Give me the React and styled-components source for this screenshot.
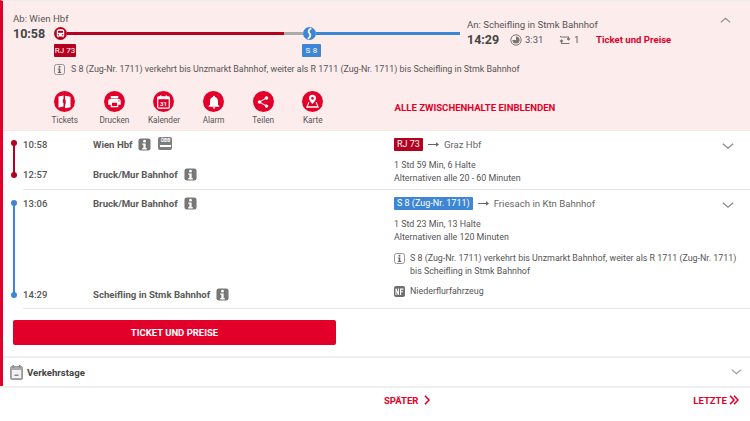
import React from 'react';
import styled, { createGlobalStyle } from 'styled-components';

const RED = '#e2002a';
const DARK_RED = '#b5001f';
const BLUE = '#3d86d6';
const TEXT = '#555';
const STRONG = '#444';

const Global = createGlobalStyle`
  html, body { margin: 0; padding: 0; background: #fff; }
  body { font-family: Roboto, "Liberation Sans", sans-serif; color: ${TEXT}; width: 750px; height: 421px; overflow: hidden; }
  * { box-sizing: border-box; }
`;

const Page = styled.div`width: 750px; display: flex; flex-direction: column;`;
const Framed = styled.div`border-left: 3px solid ${RED}; border-top: 1px solid #ececec;`;

const Summary = styled.section`
  background: #fdecec; height: 130px; padding: 11px 10px 0 10px; border-bottom: 1px solid #ececec;
  display: flex; flex-direction: column;
`;
const JourneyRow = styled.div`display: flex; height: 46px;`;
const DepartColumn = styled.div`width: 41px; flex: none;`;
const StationLabel = styled.div`font-size: 9.6px; line-height: 13px; white-space: nowrap; color: ${TEXT};`;
const DepartTime = styled.div`font-size: 12.5px; line-height: 16px; font-weight: 700; color: ${STRONG}; margin-top: 1px;`;

const Track = styled.div`width: 406px; flex: none; padding-top: 15px; display: flex; flex-direction: column;`;
const TrackLine = styled.div`display: flex; align-items: center; height: 13px;`;
const Segment = styled.div`height: 3px; width: ${p => p.$w}px; background: ${p => p.$c}; flex: none;`;
const TrackBadges = styled.div`display: flex; margin-top: 4px;`;
const LineBadge = styled.span`
  display: inline-block; background: ${p => p.$c}; color: #fff; border-radius: 1px; font-size: ${p => p.$size || 9}px;
  line-height: 13px; height: 13px; padding: 0 ${p => p.$pad ?? 2}px; white-space: nowrap; text-align: center;
`;
const FirstBadge = styled(LineBadge)`width: 22px; font-size: 8px; padding: 0;`;
const SecondBadge = styled(LineBadge)`margin-left: 226px; width: 19px; font-size: 8px; letter-spacing: .3px; padding: 0;`;

const ArriveColumn = styled.div`margin-left: 7px; flex: 1; padding-top: 6px;`;
const ArriveLine = styled.div`display: flex; align-items: center; margin-top: 0; height: 17px;`;
const ArriveTime = styled.div`font-size: 12.5px; font-weight: 700; color: ${STRONG}; width: 43px; flex: none;`;
const Meta = styled.span`font-size: 9.5px; color: ${TEXT}; display: flex; align-items: center; gap: 3px; width: ${p => p.$w}px; flex: none;`;
const TicketLink = styled.a`font-size: 9.6px; font-weight: 700; color: ${RED}; white-space: nowrap;`;
const CollapseBox = styled.div`width: 20px; flex: none; margin-top: -4px; margin-left: 2px;`;

const Notice = styled.div`display: flex; align-items: center; gap: 6px; margin: 5px 0 0 41px; height: 13px;`;
const NoticeText = styled.span`font-size: 8.9px; line-height: 13px; white-space: nowrap; color: ${TEXT};`;

const ActionBar = styled.div`display: flex; align-items: flex-start; margin-top: 15px; margin-left: 27px;`;
const Action = styled.div`width: 49.6px; flex: none; display: flex; flex-direction: column; align-items: center; gap: 2px;`;
const ActionCircle = styled.span`
  width: 21px; height: 21px; border-radius: 50%; background: ${RED}; display: flex; align-items: center; justify-content: center;
`;
const ActionLabel = styled.span`font-size: 8.2px; line-height: 12px; color: ${TEXT}; white-space: nowrap;`;
const ShowAll = styled.a`font-size: 9.6px; font-weight: 700; color: ${RED}; margin-left: 57px; margin-top: 11px; white-space: nowrap;`;

const Leg = styled.section`display: flex; height: ${p => p.$h}px; padding-left: 7px;`;
const Timeline = styled.div`
  width: 7px; flex: none; display: flex; flex-direction: column; align-items: center; padding-top: ${p => p.$top}px;
`;
const Dot = styled.span`width: 6px; height: 6px; border-radius: 50%; background: ${p => p.$c}; flex: none;`;
const Rail = styled.span`width: 2px; height: ${p => p.$h}px; background: ${p => p.$c}; flex: none; margin: -1px 0;`;

const LegBody = styled.div`
  margin-left: 6px; flex: 1; display: flex; border-bottom: 1px solid #e6e6e6;
`;
const Stops = styled.div`
  width: 371px; flex: none; display: flex; flex-direction: column; justify-content: space-between; padding: ${p => p.$pad};
`;
const Stop = styled.div`display: flex; align-items: center; height: 14px;`;
const StopTime = styled.span`font-size: 9.5px; font-weight: 500; color: ${TEXT}; width: 70px; flex: none; letter-spacing: .1px;`;
const StopName = styled.span`font-size: 9.6px; font-weight: 700; color: #5a5a5a; white-space: nowrap; margin-right: 6px;`;
const IconGap = styled.span`display: inline-flex; margin-right: 7px;`;

const ObbIcon = styled.span`
  width: 14px; height: 13px; background: #7d7d7d; border-radius: 2px; color: #fff; font-size: 4.8px; line-height: 6px;
  display: flex; flex-direction: column; align-items: center; padding-top: 1px; font-weight: 700; margin-top: -1px;
  &::after { content: ''; display: block; width: 11px; height: 1.5px; background: #fff; margin-top: 1px; }
`;

const Details = styled.div`flex: 1; padding: 7px 0 0 0; min-width: 0;`;
const LineHead = styled.div`display: flex; align-items: center; height: 13px;`;
const Direction = styled.span`font-size: 9.6px; color: #666; white-space: nowrap; margin-left: 5px;`;
const HeadSpacer = styled.span`flex: 1;`;
const ChevronBox = styled.span`display: inline-flex; margin-right: 16px; margin-top: 3px;`;
const Summary2 = styled.div`font-size: 8.9px; line-height: 12.5px; color: ${TEXT}; margin-top: 8px;`;
const NoteRow = styled.div`display: flex; gap: 5px; margin-top: ${p => p.$mt}px; font-size: 8.9px; line-height: 12.5px; color: ${TEXT}; width: 350px;`;
const NoteIcon = styled.span`flex: none; width: 11px; display: inline-flex; margin-top: 1px;`;

const ButtonArea = styled.div`padding: 11px 0 12px 10px; height: 49px; border-bottom: 2px solid #f0f0f0;`;
const TicketButton = styled.button`
  width: 323px; height: 25px; background: ${RED}; color: #fff; font-family: inherit; border: 0; border-radius: 2px;
  font-size: 9.5px; font-weight: 700; display: block; padding: 0 0 1px;
`;
const DaysRow = styled.div`
  height: 28px; display: flex; align-items: center; padding-left: 7px; gap: 4px;
`;
const DaysLabel = styled.span`font-size: 9.6px; font-weight: 700; color: ${STRONG}; flex: 1;`;
const DaysChevron = styled.span`display: inline-flex; margin-right: 8px;`;

const Pager = styled.nav`
  border-top: 2px solid #f0f0f0; display: flex; align-items: center; height: 26px; padding-left: 384px; margin-top: 0;
`;
const PagerLink = styled.a`
  font-size: 9.5px; font-weight: 700; color: ${RED}; display: inline-flex; align-items: center; gap: ${p => p.$gap}px; margin-left: ${p => p.$ml || 0}px;
  white-space: nowrap;
`;

const Chevron = ({ up, w = 12, c = '#8a8a8a' }) => (
  <svg width={w} height={w * 0.55} viewBox="0 0 16 9" fill="none" stroke={c} strokeWidth="1.7">
    <path d={up ? 'M1 8 L8 2 L15 8' : 'M1 1 L8 7 L15 1'} />
  </svg>
);

const InfoSolid = () => (
  <svg width="13" height="13" viewBox="0 0 14 14">
    <rect x=".5" y=".5" width="13" height="13" rx="2.5" fill="#777" />
    <circle cx="7" cy="3.4" r="1.5" fill="#fff" />
    <path d="M4.6 6h3.6v4.8h1.2v1.5H4.6v-1.5h1.2V7.4H4.6z" fill="#fff" />
  </svg>
);
const InfoOutline = () => (
  <svg width="11" height="11" viewBox="0 0 11 11">
    <rect x=".5" y=".5" width="10" height="10" rx="2" fill="none" stroke="#888" strokeWidth=".9" />
    <circle cx="5.5" cy="2.7" r="1" fill="#666" />
    <path d="M3.8 4.5h2.5v3.6h.9v1H3.8v-1h.9V5.5h-.9z" fill="#666" />
  </svg>
);
const NfIcon = () => (
  <svg width="11" height="11" viewBox="0 0 11 11">
    <rect width="11" height="11" rx="2" fill="#6e6e6e" />
    <path d="M1.5 9V2.5h1l1.4 3.8V2.5h1V9h-1L2.5 5.3V9zM6 9V2.5h3.5v1.2H7.1v1.5h2v1.1h-2V9z" fill="#fff" />
  </svg>
);

const RailIcon = () => (
  <svg width="13" height="13" viewBox="0 0 13 13" style={{ flex: 'none' }}>
    <circle cx="6.5" cy="6.5" r="6.5" fill={DARK_RED} />
    <path d="M2.8 4c0-1.2 1-1.7 3.7-1.7s3.7.5 3.7 1.7v4.4c0 .5-.3.8-.6.9v1H8.4v-.8H4.6v.8H3.4v-1c-.3-.1-.6-.4-.6-.9z" fill="#fff" />
    <rect x="4" y="3.8" width="5" height="2" fill={DARK_RED} />
    <circle cx="4.4" cy="7.8" r=".7" fill={DARK_RED} />
    <circle cx="8.6" cy="7.8" r=".7" fill={DARK_RED} />
  </svg>
);
const SBahnIcon = () => (
  <svg width="13" height="13" viewBox="0 0 13 13" style={{ flex: 'none' }}>
    <circle cx="6.5" cy="6.5" r="6.5" fill={BLUE} />
    <path d="M8.2 1.2 C5.4 3 5 4.6 6.5 6.3 C8 8 7.6 10 4.8 11.8" fill="none" stroke="#fff" strokeWidth="1.8" />
  </svg>
);
const ClockIcon = () => (
  <svg width="12" height="12" viewBox="0 0 12 12">
    <circle cx="6" cy="6" r="5.2" fill="none" stroke="#777" strokeWidth="1" />
    <path d="M6 2.4A3.6 3.6 0 1 1 2.4 6H6z" fill="#777" />
  </svg>
);
const TransferIcon = () => (
  <svg width="12" height="11" viewBox="0 0 12 11" fill="none" stroke="#777" strokeWidth="1.1">
    <path d="M1.5 3h8v3M8 4.5l1.5 1.5L11 4.5M1.5 2v1" />
    <path d="M10.5 9.5h-8v-3M1 7.5 2.5 6 4 7.5" />
  </svg>
);
const Arrow = () => (
  <svg width="11" height="7" viewBox="0 0 13 7" style={{ marginLeft: 5, flex: 'none' }}>
    <path d="M0 3h9.5V.8L13 3.5 9.5 6.2V4H0z" fill="#666" />
  </svg>
);
const CalendarSmall = () => (
  <svg width="13" height="15" viewBox="0 0 13 15">
    <rect x=".5" y="1.5" width="12" height="13" rx="1.5" fill="#aaa" stroke="#999" />
    <rect x="2" y="5" width="9" height="8" fill="#f2f2f2" />
    <rect x="4.5" y="9.5" width="4" height="1.5" fill="#888" />
    <rect x="2.5" y="0" width="1.5" height="3" fill="#888" />
    <rect x="9" y="0" width="1.5" height="3" fill="#888" />
  </svg>
);
const Next = () => (
  <svg width="6" height="10" viewBox="0 0 6 10" fill="none" stroke={RED} strokeWidth="1.6"><path d="M1 .7 5 5 1 9.3" /></svg>
);
const Last = () => (
  <svg width="10" height="10" viewBox="0 0 10 10" fill="none" stroke={RED} strokeWidth="1.6"><path d="M1 .7 5 5 1 9.3M5 .7 9 5 5 9.3" /></svg>
);

const icons = {
  tickets: <svg width="15" height="15" viewBox="0 0 15 15" fill="#fff"><path d="M1.5 2.5l5-1v3.6l-.7.7v2.4l.7.7v3.6l-5 1z" /><path d="M8 1.8l5.5 1v10.4l-5.5 1v-3.6l.7-.7V6.1L8 5.4z" /></svg>,
  print: <svg width="15" height="15" viewBox="0 0 24 24" fill="#fff"><path d="M19 8H5c-1.66 0-3 1.34-3 3v6h4v4h12v-4h4v-6c0-1.66-1.34-3-3-3zm-3 11H8v-5h8v5zm3-7c-.55 0-1-.45-1-1s.45-1 1-1 1 .45 1 1-.45 1-1 1zm-1-9H6v4h12V3z" /></svg>,
  calendar: (
    <svg width="13" height="14" viewBox="0 0 13 14">
      <rect x=".7" y="1.8" width="11.6" height="11.4" rx="1" fill="none" stroke="#fff" strokeWidth="1.2" />
      <rect x=".7" y="1.8" width="11.6" height="2.4" fill="#fff" />
      <rect x="3" y=".3" width="1.3" height="2.4" fill="#fff" />
      <rect x="8.7" y=".3" width="1.3" height="2.4" fill="#fff" />
      <text x="6.5" y="11.2" fontSize="6" fontWeight="700" fill="#fff" textAnchor="middle" fontFamily="Roboto, sans-serif">31</text>
    </svg>
  ),
  bell: <svg width="16" height="16" viewBox="0 0 24 24" fill="#fff"><path d="M12 22c1.1 0 2-.9 2-2h-4c0 1.1.89 2 2 2zm6-6v-5c0-3.07-1.64-5.64-4.5-6.32V4c0-.83-.67-1.5-1.5-1.5s-1.5.67-1.5 1.5v.68C7.63 5.36 6 7.92 6 11v5l-2 2v1h16v-1l-2-2z" /></svg>,
  share: <svg width="14" height="14" viewBox="0 0 24 24" fill="#fff"><path d="M18 16.08c-.76 0-1.44.3-1.96.77L8.91 12.7c.05-.23.09-.46.09-.7s-.04-.47-.09-.7l7.05-4.11c.54.5 1.25.81 2.04.81 1.66 0 3-1.34 3-3s-1.34-3-3-3-3 1.34-3 3c0 .24.04.47.09.7L8.04 9.81C7.5 9.31 6.79 9 6 9c-1.66 0-3 1.34-3 3s1.34 3 3 3c.79 0 1.5-.31 2.04-.81l7.12 4.16c-.05.21-.08.43-.08.65 0 1.61 1.31 2.92 2.92 2.92 1.61 0 2.92-1.31 2.92-2.92s-1.31-2.92-2.92-2.92z" /></svg>,
  map: (
    <svg width="15" height="15" viewBox="0 0 15 15">
      <path d="M7.5 .8a3.5 3.5 0 0 0-3.5 3.5c0 2.4 3.5 5.7 3.5 5.7S11 6.7 11 4.3A3.5 3.5 0 0 0 7.5.8zm0 4.9a1.4 1.4 0 1 1 0-2.8 1.4 1.4 0 0 1 0 2.8z" fill="#fff" />
      <path d="M3.4 8 1 13.7h13L11.6 8h-1l1.6 4.2H2.8L4.4 8z" fill="#fff" />
    </svg>
  ),
};

const actions = [
  ['Tickets', 'tickets'], ['Drucken', 'print'], ['Kalender', 'calendar'],
  ['Alarm', 'bell'], ['Teilen', 'share'], ['Karte', 'map'],
];

export default function App() {
  return (
    <Page>
      <Global />
      <Framed>
        <Summary>
          <JourneyRow>
            <DepartColumn>
              <StationLabel>Ab: Wien Hbf</StationLabel>
              <DepartTime>10:58</DepartTime>
            </DepartColumn>
            <Track>
              <TrackLine>
                <RailIcon />
                <Segment $w={217} $c={DARK_RED} />
                <Segment $w={19} $c="#aaa" />
                <SBahnIcon />
                <Segment $w={144} $c={BLUE} />
              </TrackLine>
              <TrackBadges>
                <FirstBadge $c={DARK_RED}>RJ 73</FirstBadge>
                <SecondBadge $c={BLUE}>S 8</SecondBadge>
              </TrackBadges>
            </Track>
            <ArriveColumn>
              <StationLabel>An: Scheifling in Stmk Bahnhof</StationLabel>
              <ArriveLine>
                <ArriveTime>14:29</ArriveTime>
                <Meta $w={49}><ClockIcon />3:31</Meta>
                <Meta $w={37}><TransferIcon />1</Meta>
                <TicketLink>Ticket und Preise</TicketLink>
              </ArriveLine>
            </ArriveColumn>
            <CollapseBox><Chevron up w={11} /></CollapseBox>
          </JourneyRow>
          <Notice>
            <InfoOutline />
            <NoticeText>S 8 (Zug-Nr. 1711) verkehrt bis Unzmarkt Bahnhof, weiter als R 1711 (Zug-Nr. 1711) bis Scheifling in Stmk Bahnhof</NoticeText>
          </Notice>
          <ActionBar>
            {actions.map(([label, key]) => (
              <Action key={key}>
                <ActionCircle>{icons[key]}</ActionCircle>
                <ActionLabel>{label}</ActionLabel>
              </Action>
            ))}
            <ShowAll>ALLE ZWISCHENHALTE EINBLENDEN</ShowAll>
          </ActionBar>
        </Summary>

        <Leg $h={59}>
          <Timeline $top={9}>
            <Dot $c={DARK_RED} />
            <Rail $c={DARK_RED} $h={28} />
            <Dot $c={DARK_RED} />
          </Timeline>
          <LegBody>
            <Stops $pad="6px 0 8px 0">
              <Stop>
                <StopTime>10:58</StopTime>
                <StopName>Wien Hbf</StopName>
                <IconGap><InfoSolid /></IconGap>
                <ObbIcon>ÖBB</ObbIcon>
              </Stop>
              <Stop>
                <StopTime>12:57</StopTime>
                <StopName>Bruck/Mur Bahnhof</StopName>
                <InfoSolid />
              </Stop>
            </Stops>
            <Details>
              <LineHead>
                <LineBadge $c={DARK_RED} $pad={3}>RJ 73</LineBadge>
                <Arrow />
                <Direction>Graz Hbf</Direction>
                <HeadSpacer />
                <ChevronBox><Chevron /></ChevronBox>
              </LineHead>
              <Summary2>1 Std 59 Min, 6 Halte<br />Alternativen alle 20 - 60 Minuten</Summary2>
            </Details>
          </LegBody>
        </Leg>

        <Leg $h={119}>
          <Timeline $top={10}>
            <Dot $c={BLUE} />
            <Rail $c={BLUE} $h={88} />
            <Dot $c={BLUE} />
          </Timeline>
          <LegBody>
            <Stops $pad="6px 0 7px 0">
              <Stop>
                <StopTime>13:06</StopTime>
                <StopName>Bruck/Mur Bahnhof</StopName>
                <InfoSolid />
              </Stop>
              <Stop>
                <StopTime>14:29</StopTime>
                <StopName>Scheifling in Stmk Bahnhof</StopName>
                <InfoSolid />
              </Stop>
            </Stops>
            <Details>
              <LineHead>
                <LineBadge $c={BLUE} $pad={3}>S 8 (Zug-Nr. 1711)</LineBadge>
                <Arrow />
                <Direction>Friesach in Ktn Bahnhof</Direction>
                <HeadSpacer />
                <ChevronBox><Chevron /></ChevronBox>
              </LineHead>
              <Summary2>1 Std 23 Min, 13 Halte<br />Alternativen alle 120 Minuten</Summary2>
              <NoteRow $mt={9}>
                <NoteIcon><InfoOutline /></NoteIcon>
                <span>S 8 (Zug-Nr. 1711) verkehrt bis Unzmarkt Bahnhof, weiter als R 1711 (Zug-Nr. 1711) bis Scheifling in Stmk Bahnhof</span>
              </NoteRow>
              <NoteRow $mt={8}>
                <NoteIcon><NfIcon /></NoteIcon>
                <span>Niederflurfahrzeug</span>
              </NoteRow>
            </Details>
          </LegBody>
        </Leg>

        <ButtonArea>
          <TicketButton>TICKET UND PREISE</TicketButton>
        </ButtonArea>
        <DaysRow>
          <CalendarSmall />
          <DaysLabel>Verkehrstage</DaysLabel>
          <DaysChevron><Chevron w={11} c="#999" /></DaysChevron>
        </DaysRow>
      </Framed>
      <Pager>
        <PagerLink $gap={6}>SPÄTER <Next /></PagerLink>
        <PagerLink $gap={2} $ml={263}>LETZTE <Last /></PagerLink>
      </Pager>
    </Page>
  );
}
